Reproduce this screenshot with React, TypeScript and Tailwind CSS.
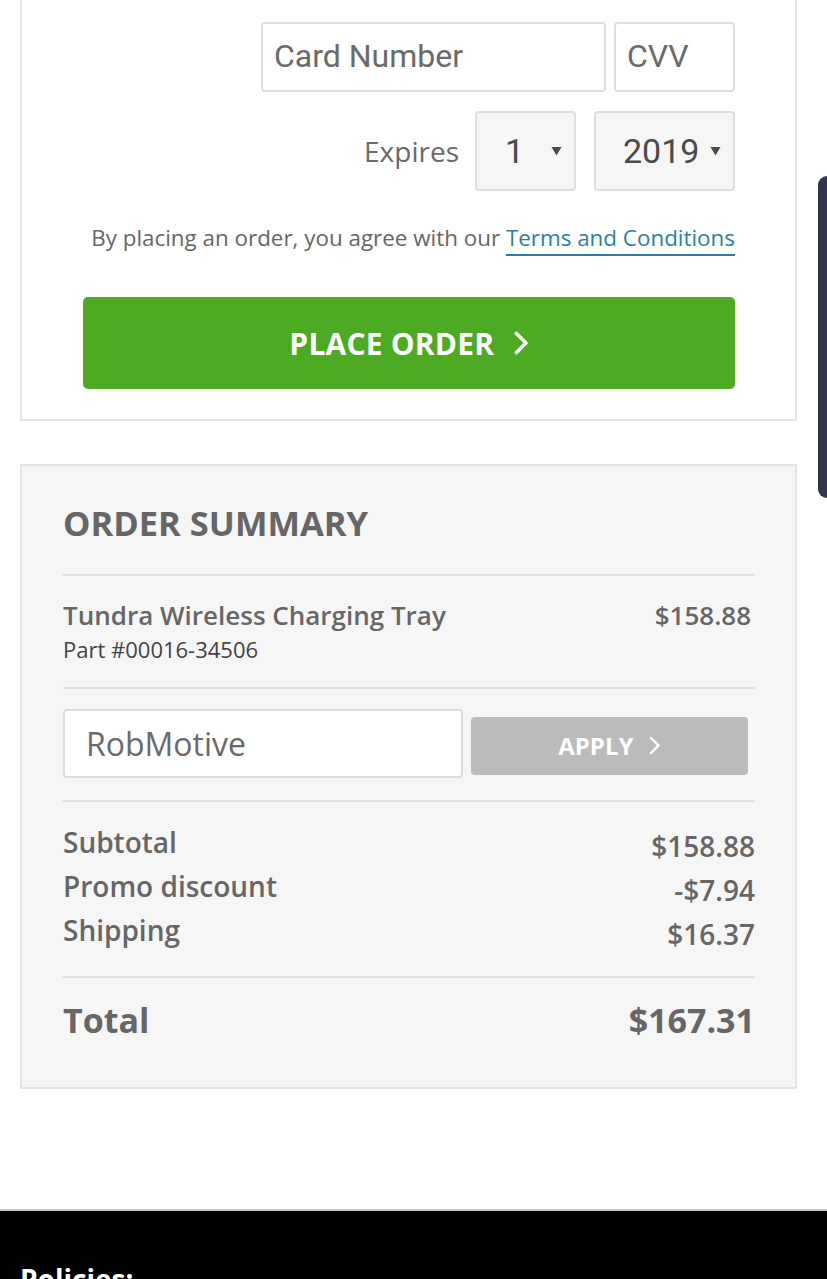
import React from "react";

function Caret() {
  return (
    <svg width="11" height="10" viewBox="0 0 11 10" className="shrink-0">
      <path d="M0.5 1 L10.5 1 L5.5 9.5 Z" fill="#4a4a4a" />
    </svg>
  );
}

function Chevron({ size = 22, stroke = 3 }: { size?: number; stroke?: number }) {
  return (
    <svg width={size * 0.6} height={size} viewBox="0 0 12 20" className="shrink-0">
      <path d="M2 2 L10 10 L2 18" fill="none" stroke="white" strokeWidth={stroke} strokeLinecap="round" strokeLinejoin="round" />
    </svg>
  );
}

function SummaryRow({ label, value }: { label: string; value: string }) {
  return (
    <div className="flex justify-between items-start h-[44px]">
      <span className="text-[28px] leading-[36px] font-semibold">{label}</span>
      <span className="text-[28px] leading-[36px] font-semibold mt-[4px]">{value}</span>
    </div>
  );
}

export default function App() {
  return (
    <div className="relative min-h-[1279px] bg-white overflow-hidden" style={{ fontFamily: '"Open Sans", sans-serif' }}>
      {/* payment card */}
      <div className="ml-[20px] mr-[30px] border-2 border-t-0 border-[#e6e6e6] bg-white pl-[61px] pr-[60px] pt-[22px] pb-[30px]">
        <div className="flex justify-end gap-[8px]">
          <div className="w-[345px] h-[70px] rounded-[4px] border-2 border-[#dedede] flex items-center pl-[11px] pb-[3px] text-[32px] text-[#6a6a6a]" style={{ fontFamily: "Roboto, sans-serif" }}>
            Card Number
          </div>
          <div className="w-[121px] h-[70px] rounded-[4px] border-2 border-[#dedede] flex items-center pl-[11px] pb-[3px] text-[32px] text-[#6a6a6a]" style={{ fontFamily: "Roboto, sans-serif" }}>
            CVV
          </div>
        </div>
        <div className="flex justify-end items-center mt-[19px]">
          <span className="text-[28px] text-[#6a6a6a] mr-[16px]">Expires</span>
          <div className="w-[101px] h-[80px] rounded-[4px] border-2 border-[#dedede] bg-[#f6f6f6] flex items-center justify-between pl-[28px] pr-[12px] text-[34px] text-[#4a4a4a]" style={{ fontFamily: "Roboto, sans-serif" }}>
            <span>1</span>
            <Caret />
          </div>
          <div className="ml-[18px] w-[141px] h-[80px] rounded-[4px] border-2 border-[#dedede] bg-[#f6f6f6] flex items-center justify-between pl-[27px] pr-[12px] text-[34px] text-[#4a4a4a]" style={{ fontFamily: "Roboto, sans-serif" }}>
            <span>2019</span>
            <Caret />
          </div>
        </div>
        <p className="mt-[31px] text-right text-[22.4px] leading-[32px] text-[#666]">
          By placing an order, you agree with our{" "}
          <a className="text-[#2e7fa1] border-b-2 border-[#2e7fa1] pb-[1px]">Terms and Conditions</a>
        </p>
        <button className="mt-[43px] w-full h-[92px] rounded-[5px] bg-[#4caa23] flex items-center justify-center gap-[20px] text-white font-bold text-[30px] tracking-[0.2px]">
          <span>PLACE ORDER</span>
          <Chevron size={24} stroke={3} />
        </button>
      </div>

      {/* order summary */}
      <div className="mt-[43px] ml-[20px] mr-[30px] border-2 border-[#e4e4e4] bg-[#f6f6f6] pl-[41px] pr-[40px] pt-[37px] pb-[45px] text-[#666]">
        <h2 className="text-[34.5px] leading-[40px] font-bold">ORDER SUMMARY</h2>
        <div className="mt-[31px] border-t-2 border-[#e0e0e0]" />
        <div className="flex justify-between pt-[22px] pb-[23px]">
          <div>
            <div className="text-[26px] leading-[34px] font-semibold">Tundra Wireless Charging Tray</div>
            <div className="text-[22px] leading-[30px] text-[#444] mt-[2px]">Part #00016-34506</div>
          </div>
          <div className="text-[26px] leading-[34px] font-semibold pr-[4px]">$158.88</div>
        </div>
        <div className="border-t-2 border-[#e0e0e0]" />
        <div className="flex items-center gap-[8px] pt-[20px] pb-[22px]">
          <div className="w-[400px] h-[69px] rounded-[4px] border-2 border-[#dcdcdc] bg-white flex items-center pl-[21px] text-[32px] text-[#6a6a6a]">
            RobMotive
          </div>
          <button className="w-[277px] h-[58px] rounded-[4px] bg-[#bbbbbb] flex items-center justify-center gap-[16px] text-white font-bold text-[24px] mt-[4px]">
            <span>APPLY</span>
            <Chevron size={19} stroke={2.5} />
          </button>
        </div>
        <div className="border-t-2 border-[#e0e0e0]" />
        <div className="pt-[22px] pb-[20px]">
          <SummaryRow label="Subtotal" value="$158.88" />
          <SummaryRow label="Promo discount" value="-$7.94" />
          <SummaryRow label="Shipping" value="$16.37" />
        </div>
        <div className="border-t-2 border-[#e0e0e0]" />
        <div className="flex justify-between items-center pt-[20px] text-[34px] leading-[44px] font-bold">
          <span>Total</span>
          <span>$167.31</span>
        </div>
      </div>

      {/* footer */}
      <div className="mt-[120px] border-t-2 border-[#c8c8c8] bg-black h-[200px] px-[20px] pt-[50px]">
        <div className="text-white font-bold text-[28px] leading-[36px]">Policies:</div>
      </div>

      {/* edge handle overlay */}
      <div className="absolute right-0 top-[176px] w-[9px] h-[322px] bg-[#34344a] rounded-l-[9px]" />
    </div>
  );
}
